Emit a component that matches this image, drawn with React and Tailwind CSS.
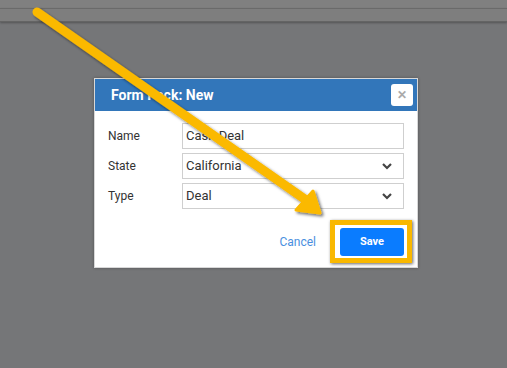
import React from "react";

const Arrow = () => (
    <svg className="absolute left-0 top-0 pointer-events-none" width="507" height="368" viewBox="0 0 507 368">
        <defs>
            <filter id="sh" x="-20%" y="-20%" width="140%" height="140%">
                <feDropShadow dx="2" dy="2" stdDeviation="1.5" floodColor="#000" floodOpacity="0.55" />
            </filter>
        </defs>
        <g filter="url(#sh)">
            <line x1="37" y1="12" x2="306" y2="200" stroke="#fbb900" strokeWidth="9" strokeLinecap="round" />
            <polygon points="320,213 296,210 313,191" fill="#fbb900" stroke="#fbb900" strokeWidth="3" strokeLinejoin="round" />
        </g>
    </svg>
);

const Chevron = () => (
    <svg width="12" height="12" viewBox="0 0 12 12" className="text-[#444]">
        <path d="M2 4l4 4 4-4" fill="none" stroke="currentColor" strokeWidth="2.2" />
    </svg>
);

const Row = ({ label, value, select }) => (
    <div className="flex items-center h-[26px]">
        <span className="w-[74px] text-[12px] text-[#333]">{label}</span>
        <div className="flex-1 h-[26px] border border-[#cfcfcf] flex items-center justify-between pl-[3px] pr-[10px] text-[13px] text-[#333]">
            <span>{value}</span>
            {select && <Chevron />}
        </div>
    </div>
);

export default function App() {
    return (
        <div className="relative w-[507px] h-[368px] overflow-hidden bg-[#757678]" style={{ fontFamily: "Roboto, 'Liberation Sans', sans-serif" }}>
            <div className="h-[8px] bg-[#808080]" />
            <div className="h-[14px] bg-[#7e7e7e] border-t border-[#6a6a6a] border-b border-b-[#646464] shadow-[0_1px_2px_rgba(0,0,0,0.3)]" />
            <div className="ml-[94px] mt-[56px] w-[324px] bg-white border border-[#d8d8d8] shadow-[0_0_3px_rgba(0,0,0,0.3)]">
                <div className="h-[32px] bg-[#3276ba] flex items-center justify-between pl-[16px] pr-[4px]">
                    <span className="text-white font-bold text-[14px]">Form Pack: New</span>
                    <div className="w-[22px] h-[22px] bg-white rounded-[3px] flex items-center justify-center text-[#aaa] font-bold text-[12px]">
                        ✕
                    </div>
                </div>
                <div className="pl-[13px] pr-[13px] pt-[12px] flex flex-col gap-[4px]">
                    <Row label="Name" value="Cash Deal" />
                    <Row label="State" value="California" select />
                    <Row label="Type" value="Deal" select />
                </div>
                <div className="flex items-center justify-end pr-[5px] pt-[11px] pb-[4px]">
                    <span className="text-[12px] text-[#4a8fe0] mr-[14px]">Cancel</span>
                    <div className="border-[5px] border-[#f9b800] pl-[5px] pr-[3px] pt-[3px] pb-[2px] shadow-[1px_1px_3px_rgba(0,0,0,0.6)]">
                        <div className="w-[64px] h-[28px] bg-[#0a7cff] rounded-[3px] flex items-center justify-center text-white font-bold text-[11px]">
                            Save
                        </div>
                    </div>
                </div>
            </div>
            <Arrow />
        </div>
    );
}
